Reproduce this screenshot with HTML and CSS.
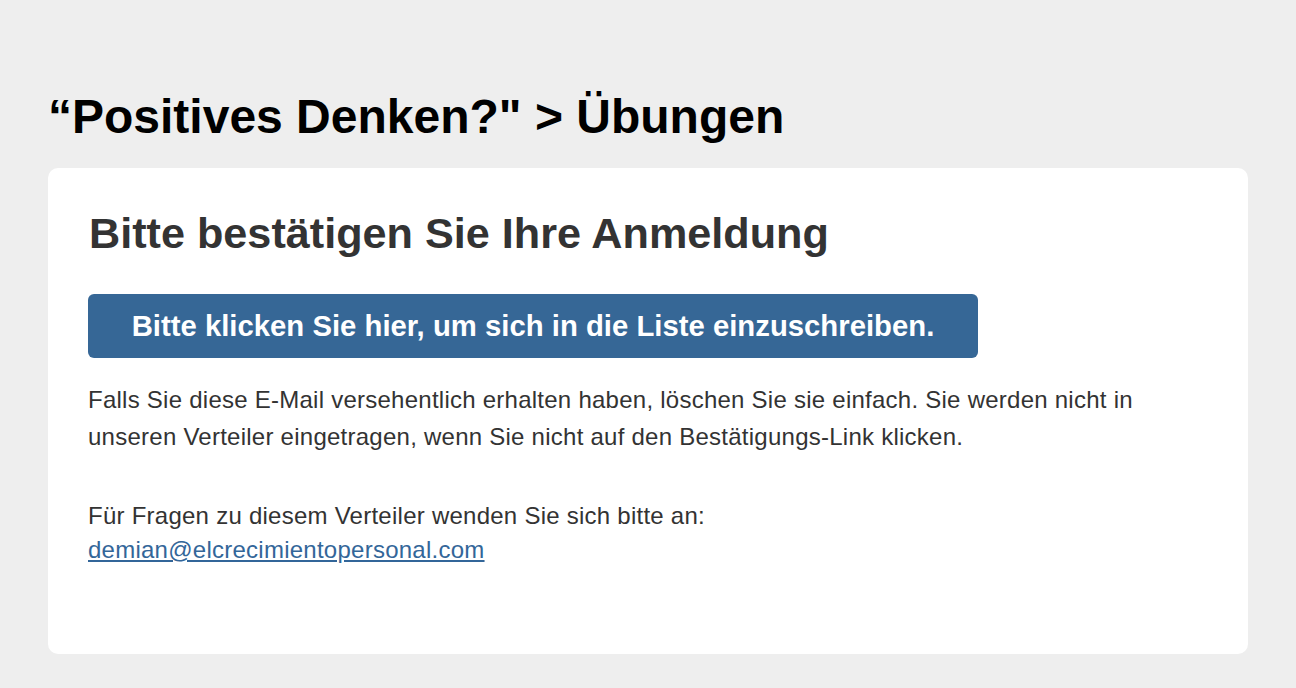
FILE: index.html
```html
<!DOCTYPE html>
<html lang="de">
<head>
<meta charset="utf-8">
<title>Bitte bestätigen Sie Ihre Anmeldung</title>
<link rel="stylesheet" href="styles.css">
</head>
<body>
<div class="wrapper">
  <h1 class="list-title">“Positives Denken?" &gt; Übungen</h1>
  <div class="card">
    <h2 class="card-title">Bitte bestätigen Sie Ihre Anmeldung</h2>
    <a class="confirm-btn" href="#">Bitte klicken Sie hier, um sich in die Liste einzuschreiben.</a>
    <p class="text">Falls Sie diese E-Mail versehentlich erhalten haben, löschen Sie sie einfach. Sie werden nicht in unseren Verteiler eingetragen, wenn Sie nicht auf den Bestätigungs-Link klicken.</p>
    <p class="text contact">Für Fragen zu diesem Verteiler wenden Sie sich bitte an:<br><a class="mail" href="#">demian@elcrecimientopersonal.com</a></p>
  </div>
</div>
</body>
</html>
```
FILE: styles.css
```css
html, body {
  margin: 0;
  padding: 0;
  background: #eeeeee;
  font-family: "Liberation Sans", Arial, Helvetica, sans-serif;
}
.wrapper {
  padding: 87px 48px 0 48px;
}
.list-title {
  margin: 0 0 21px 0;
  font-size: 48px;
  line-height: 60px;
  font-weight: bold;
  color: #000;
}
.card {
  background: #ffffff;
  border-radius: 10px;
  padding: 35px 40px 87px 40px;
}
.card-title {
  margin: 0 0 31px 1px;
  font-size: 43.2px;
  line-height: 60px;
  font-weight: bold;
  color: #333333;
}
.confirm-btn {
  display: block;
  width: 890px;
  height: 64px;
  box-sizing: border-box;
  background: #366796;
  color: #ffffff;
  border-radius: 6px;
  text-align: center;
  font-size: 29.3px;
  font-weight: bold;
  line-height: 64px;
  text-decoration: none;
}
.text {
  margin: 23px 0 0 0;
  font-size: 24px;
  letter-spacing: 0.25px;
  line-height: 37px;
  color: #333333;
  max-width: 1070px;
}
.text.contact {
  margin-top: 44px;
  line-height: 34px;
}
.mail {
  color: #336699;
  text-decoration: underline;
}
```
